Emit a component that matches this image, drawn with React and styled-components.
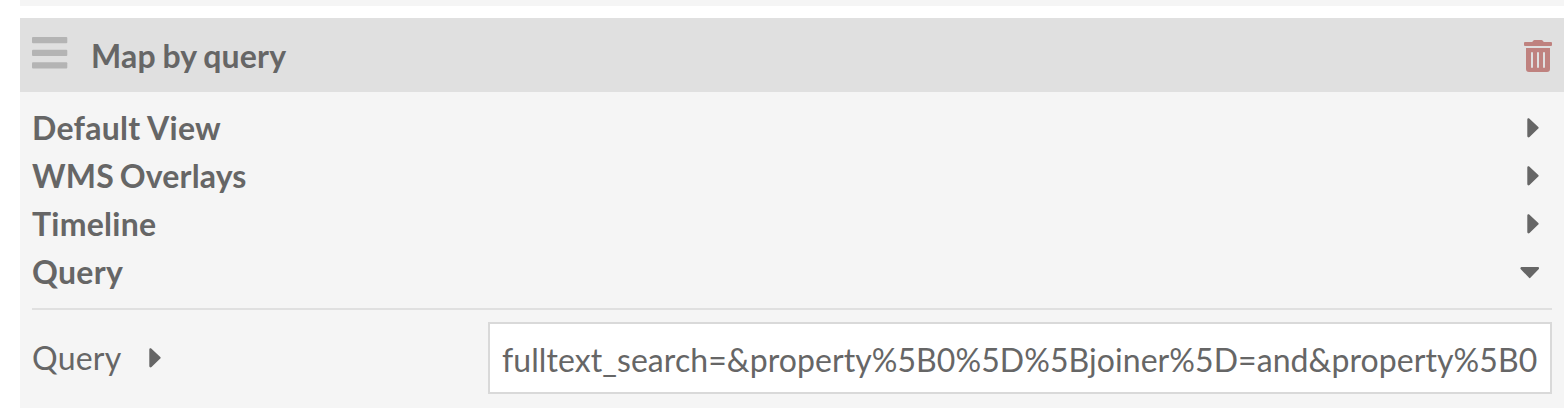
import React from 'react';
import styled, { createGlobalStyle } from 'styled-components';

const GlobalStyle = createGlobalStyle`
  * { box-sizing: border-box; }
  body {
    margin: 0;
    background: #fff;
    color: #666;
    font: 400 32px/48px Lato, sans-serif;
    overflow: hidden;
  }
  svg { display: block; flex: none; }
`;

const Page = styled.main`
  height: 412px;
  padding: 0 4px 0 20px;
  display: flex;
  flex-direction: column;
  overflow: hidden;
`;

const PreviousBlock = styled.div`
  height: 6px;
  margin-bottom: 12px;
  background: #f5f5f5;
`;

const Block = styled.section`
  height: 390px;
  background: #f5f5f5;
`;

const BlockHeader = styled.header`
  height: 74px;
  padding: 0 12px;
  display: flex;
  align-items: flex-start;
  background: #e0e0e0;
`;

const DragHandle = styled.div`
  width: 36px;
  margin: 19px 23px 0 0;
`;

const BlockTitle = styled.div`
  flex: 1;
  padding-top: 14px;
  font-weight: 700;
  letter-spacing: 0.2px;
  word-spacing: -1.4px;
`;

const DeleteButton = styled.button`
  border: 0;
  padding: 0;
  margin-top: 22px;
  background: none;
`;

const BlockBody = styled.div`
  padding: 12px 12px 0;
`;

const Toggle = styled.div`
  height: 48px;
  padding-right: 12px;
  display: flex;
  justify-content: space-between;
  align-items: center;
  font-weight: 700;
  letter-spacing: ${({ $tracking }) => $tracking}px;
  word-spacing: ${({ $wordGap = 0 }) => $wordGap}px;
`;

const Fields = styled.div`
  margin-top: 12px;
  padding-top: 12px;
  border-top: 2px solid #e0e0e0;
`;

const Field = styled.div`
  display: flex;
  align-items: center;
`;

const FieldLabel = styled.label`
  width: 456px;
  display: flex;
  align-items: center;
  gap: 27px;
  letter-spacing: 0.25px;
`;

const TextInput = styled.input`
  flex: 1;
  min-width: 0;
  height: 72px;
  padding: 2px 0 0 12px;
  border: 2px solid #d9d9d9;
  border-radius: 0;
  outline: none;
  background: #fff;
  color: #666;
  font: 400 32px/48px Lato, sans-serif;
  letter-spacing: 0.07px;
`;

const CaretRight = () => (
  <svg width="13" height="20" viewBox="0 0 13 20">
    <path d="M.3 1.7C.3.3 1.6-.1 2.5.8L11.3 9Q12.1 9.8 11.3 10.6L2.5 19C1.6 19.9.3 19.4.3 18.1Z" fill="#666" />
  </svg>
);

const CaretDown = () => (
  <svg width="20" height="13" viewBox="0 0 20 13">
    <path d="M1.9 1H17.7C19 1 19.5 2.3 18.6 3.2L10.6 11.6Q9.7 12.8 8.8 11.6L.8 3.2C-.1 2.3.5 1 1.9 1Z" fill="#666" />
  </svg>
);

const BarsIcon = () => (
  <svg width="36" height="32" viewBox="0 0 36 32" fill="#b4b4b4">
    <rect y="0" width="35.3" height="6.2" rx="1" />
    <rect y="12.7" width="35.3" height="6.2" rx="1" />
    <rect y="25.2" width="35.3" height="6.2" rx="1" />
  </svg>
);

const TrashIcon = () => (
  <svg width="28" height="32" viewBox="0 0 28 32" fill="#bf827f">
    <path d="M1 2H8.2L9.2.7Q9.7 0 10.5 0H17.5Q18.3 0 18.8.7L19.8 2H27Q28 2 28 3V5Q28 6 27 6H1Q0 6 0 5V3Q0 2 1 2Z" />
    <path
      fillRule="evenodd"
      d="M2 8H26V29Q26 32 23 32H5Q2 32 2 29ZM8 12Q7 12 7 13V27Q7 28 8 28T9 27V13Q9 12 8 12ZM14 12Q13 12 13 13V27Q13 28 14 28T15 27V13Q15 12 14 12ZM20 12Q19 12 19 13V27Q19 28 20 28T21 27V13Q21 12 20 12Z"
    />
  </svg>
);

const sections = [
  { title: 'Default View', tracking: 0.25 },
  { title: 'WMS Overlays', tracking: 0.15, wordGap: -2 },
  { title: 'Timeline', tracking: 0.25 },
  { title: 'Query', tracking: 0.3, open: true },
];

export default function App() {
  return (
    <Page>
      <GlobalStyle />
      <PreviousBlock />
      <Block>
        <BlockHeader>
          <DragHandle><BarsIcon /></DragHandle>
          <BlockTitle>Map by query</BlockTitle>
          <DeleteButton aria-label="Delete"><TrashIcon /></DeleteButton>
        </BlockHeader>
        <BlockBody>
          {sections.map(({ title, tracking, wordGap, open }) => (
            <Toggle key={title} $tracking={tracking} $wordGap={wordGap}>
              <span>{title}</span>
              {open ? <CaretDown /> : <CaretRight />}
            </Toggle>
          ))}
          <Fields>
            <Field>
              <FieldLabel htmlFor="query">Query <CaretRight /></FieldLabel>
              <TextInput
                id="query"
                type="text"
                defaultValue="fulltext_search=&property%5B0%5D%5Bjoiner%5D=and&property%5B0"
              />
            </Field>
          </Fields>
        </BlockBody>
      </Block>
    </Page>
  );
}
